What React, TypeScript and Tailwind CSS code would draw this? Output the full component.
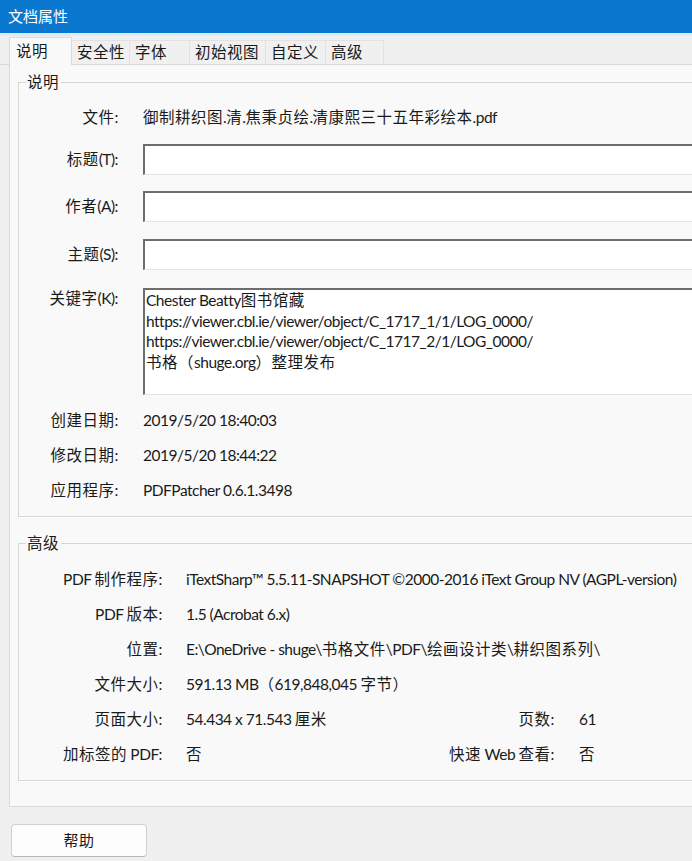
import React from 'react';

const tabs = [
  { name: '说明', w: 'w-[63px]', active: true },
  { name: '安全性', w: 'w-[58px]', active: false },
  { name: '字体', w: 'w-[60px]', active: false },
  { name: '初始视图', w: 'w-[76px]', active: false },
  { name: '自定义', w: 'w-[60px]', active: false },
  { name: '高级', w: 'w-[58px]', active: false },
];

const keywords = [
  'Chester Beatty图书馆藏',
  'https://viewer.cbl.ie/viewer/object/C_1717_1/1/LOG_0000/',
  'https://viewer.cbl.ie/viewer/object/C_1717_2/1/LOG_0000/',
  '书格（shuge.org）整理发布',
];

// latin runs are set tighter and CJK a touch wider, the dialog font is narrow
function Txt({ s }: { s: string }) {
  const parts = s.split(/([\u3000-\u9fff\uff00-\uffef]+)/);
  return (
    <>
      {parts.map((p, i) =>
        p === '' ? null : /[\u3000-\u9fff\uff00-\uffef]/.test(p) ? (
          <span key={i} className="tracking-[0.5px]">
            {p}
          </span>
        ) : (
          <span key={i} className="tracking-[-0.5px]">
            {p}
          </span>
        )
      )}
    </>
  );
}

function Sunken({ className = '', children }: { className?: string; children?: React.ReactNode }) {
  return (
    <div
      className={`flex-1 bg-white border-t-2 border-l-2 border-r border-b border-t-[#6d6d6d] border-l-[#6d6d6d] border-r-[#e3e3e3] border-b-[#e3e3e3] ${className}`}
    >
      {children}
    </div>
  );
}

function Group({ title, className, children }: { title: string; className: string; children: React.ReactNode }) {
  return (
    <div className={`relative ml-[8px] border border-[#d6d6d6] shadow-[1px_1px_0_#ffffff] ${className}`}>
      <span className="absolute -top-[11px] left-[7px] bg-[#f9f9f9] pl-[1px] pr-[2px] leading-[20px] tracking-[0.5px]">
        {title}
      </span>
      {children}
    </div>
  );
}

function InfoRow({ label, value }: { label: string; value: string }) {
  return (
    <div className="flex h-[30px] items-center">
      <span className="w-[99px] text-right">
        <Txt s={label} />
      </span>
      <span className="ml-[25px] whitespace-nowrap">
        <Txt s={value} />
      </span>
    </div>
  );
}

function InputRow({ label, className }: { label: string; className: string }) {
  return (
    <div className={`flex h-[31px] items-center ${className}`}>
      <span className="w-[99px] text-right">
        <Txt s={label} />
      </span>
      <Sunken className="ml-[25px] h-[31px]" />
    </div>
  );
}

function AdvRow({ label, value, label2, value2 }: { label: string; value: string; label2?: string; value2?: string }) {
  return (
    <div className="flex h-[35px] items-center whitespace-nowrap">
      <span className="w-[143px] text-right">
        <Txt s={label} />
      </span>
      <span className="ml-[24px] w-[250px]">
        <Txt s={value} />
      </span>
      {label2 && (
        <>
          <span className="w-[118px] text-right">
            <Txt s={label2} />
          </span>
          <span className="ml-[25px]">
            <Txt s={value2 ?? ''} />
          </span>
        </>
      )}
    </div>
  );
}

export default function App() {
  return (
    <div className="w-[692px] h-[861px] overflow-hidden bg-[#f0f0f0] text-[15.5px] text-[#1a1a1a] font-['Lato','Noto_Sans_CJK_SC',sans-serif]">
      <div className="h-[33px] bg-[#0b78d0] pl-[8px] flex items-center text-white text-[15px]">文档属性</div>
      <div className="h-[3px] bg-[#dbeaf8]" />

      <div className="flex items-end h-[29px] pl-[9px] border-b border-[#d9d9d9] tracking-[0.5px]">
        {tabs.map((t) =>
          t.active ? (
            <div
              key={t.name}
              className={`${t.w} h-[28px] -mb-px bg-[#f9f9f9] border border-b-0 border-[#d9d9d9] pl-[6px] pt-[1px] leading-[25px] relative z-10`}
            >
              {t.name}
            </div>
          ) : (
            <div
              key={t.name}
              className={`${t.w} h-[24px] bg-[#f0f0f0] border-t border-r border-[#e2e2e2] pl-[5px] leading-[23px]`}
            >
              {t.name}
            </div>
          )
        )}
      </div>

      <div className="ml-[9px] w-[760px] h-[742px] bg-[#f9f9f9] border-l border-b border-[#d9d9d9] pt-[17px]">
        <Group title="说明" className="h-[435px] pt-[20px]">
          <InfoRow label="文件:" value="御制耕织图.清.焦秉贞绘.清康熙三十五年彩绘本.pdf" />
          <InputRow label="标题(T):" className="mt-[11px]" />
          <InputRow label="作者(A):" className="mt-[16px]" />
          <InputRow label="主题(S):" className="mt-[17px]" />
          <div className="flex mt-[18px]">
            <span className="w-[99px] text-right leading-[20px]">
              <Txt s="关键字(K):" />
            </span>
            <Sunken className="ml-[25px] h-[107px] pl-[1px] leading-[20.5px] whitespace-nowrap">
              {keywords.map((k) => (
                <div key={k}>
                  <Txt s={k} />
                </div>
              ))}
            </Sunken>
          </div>
          <div className="mt-[11px]">
            <InfoRow label="创建日期:" value="2019/5/20 18:40:03" />
          </div>
          <div className="mt-[5px]">
            <InfoRow label="修改日期:" value="2019/5/20 18:44:22" />
          </div>
          <div className="mt-[5px]">
            <InfoRow label="应用程序:" value="PDFPatcher 0.6.1.3498" />
          </div>
        </Group>

        <Group title="高级" className="mt-[26px] h-[238px] pt-[18px]">
          <AdvRow label="PDF 制作程序:" value="iTextSharp™ 5.5.11-SNAPSHOT ©2000-2016 iText Group NV (AGPL-version)" />
          <AdvRow label="PDF 版本:" value="1.5 (Acrobat 6.x)" />
          <AdvRow label="位置:" value="E:\OneDrive - shuge\书格文件\PDF\绘画设计类\耕织图系列\" />
          <AdvRow label="文件大小:" value="591.13 MB（619,848,045 字节）" />
          <AdvRow label="页面大小:" value="54.434 x 71.543 厘米" label2="页数:" value2="61" />
          <AdvRow label="加标签的 PDF:" value="否" label2="快速 Web 查看:" value2="否" />
        </Group>
      </div>

      <button className="mt-[17px] ml-[11px] w-[136px] h-[33px] rounded-[4px] bg-[#fdfdfd] border border-[#d0d0d0] border-b-[#b8b8b8] text-[15px] text-[#1a1a1a] tracking-[0.5px]">
        帮助
      </button>
    </div>
  );
}
